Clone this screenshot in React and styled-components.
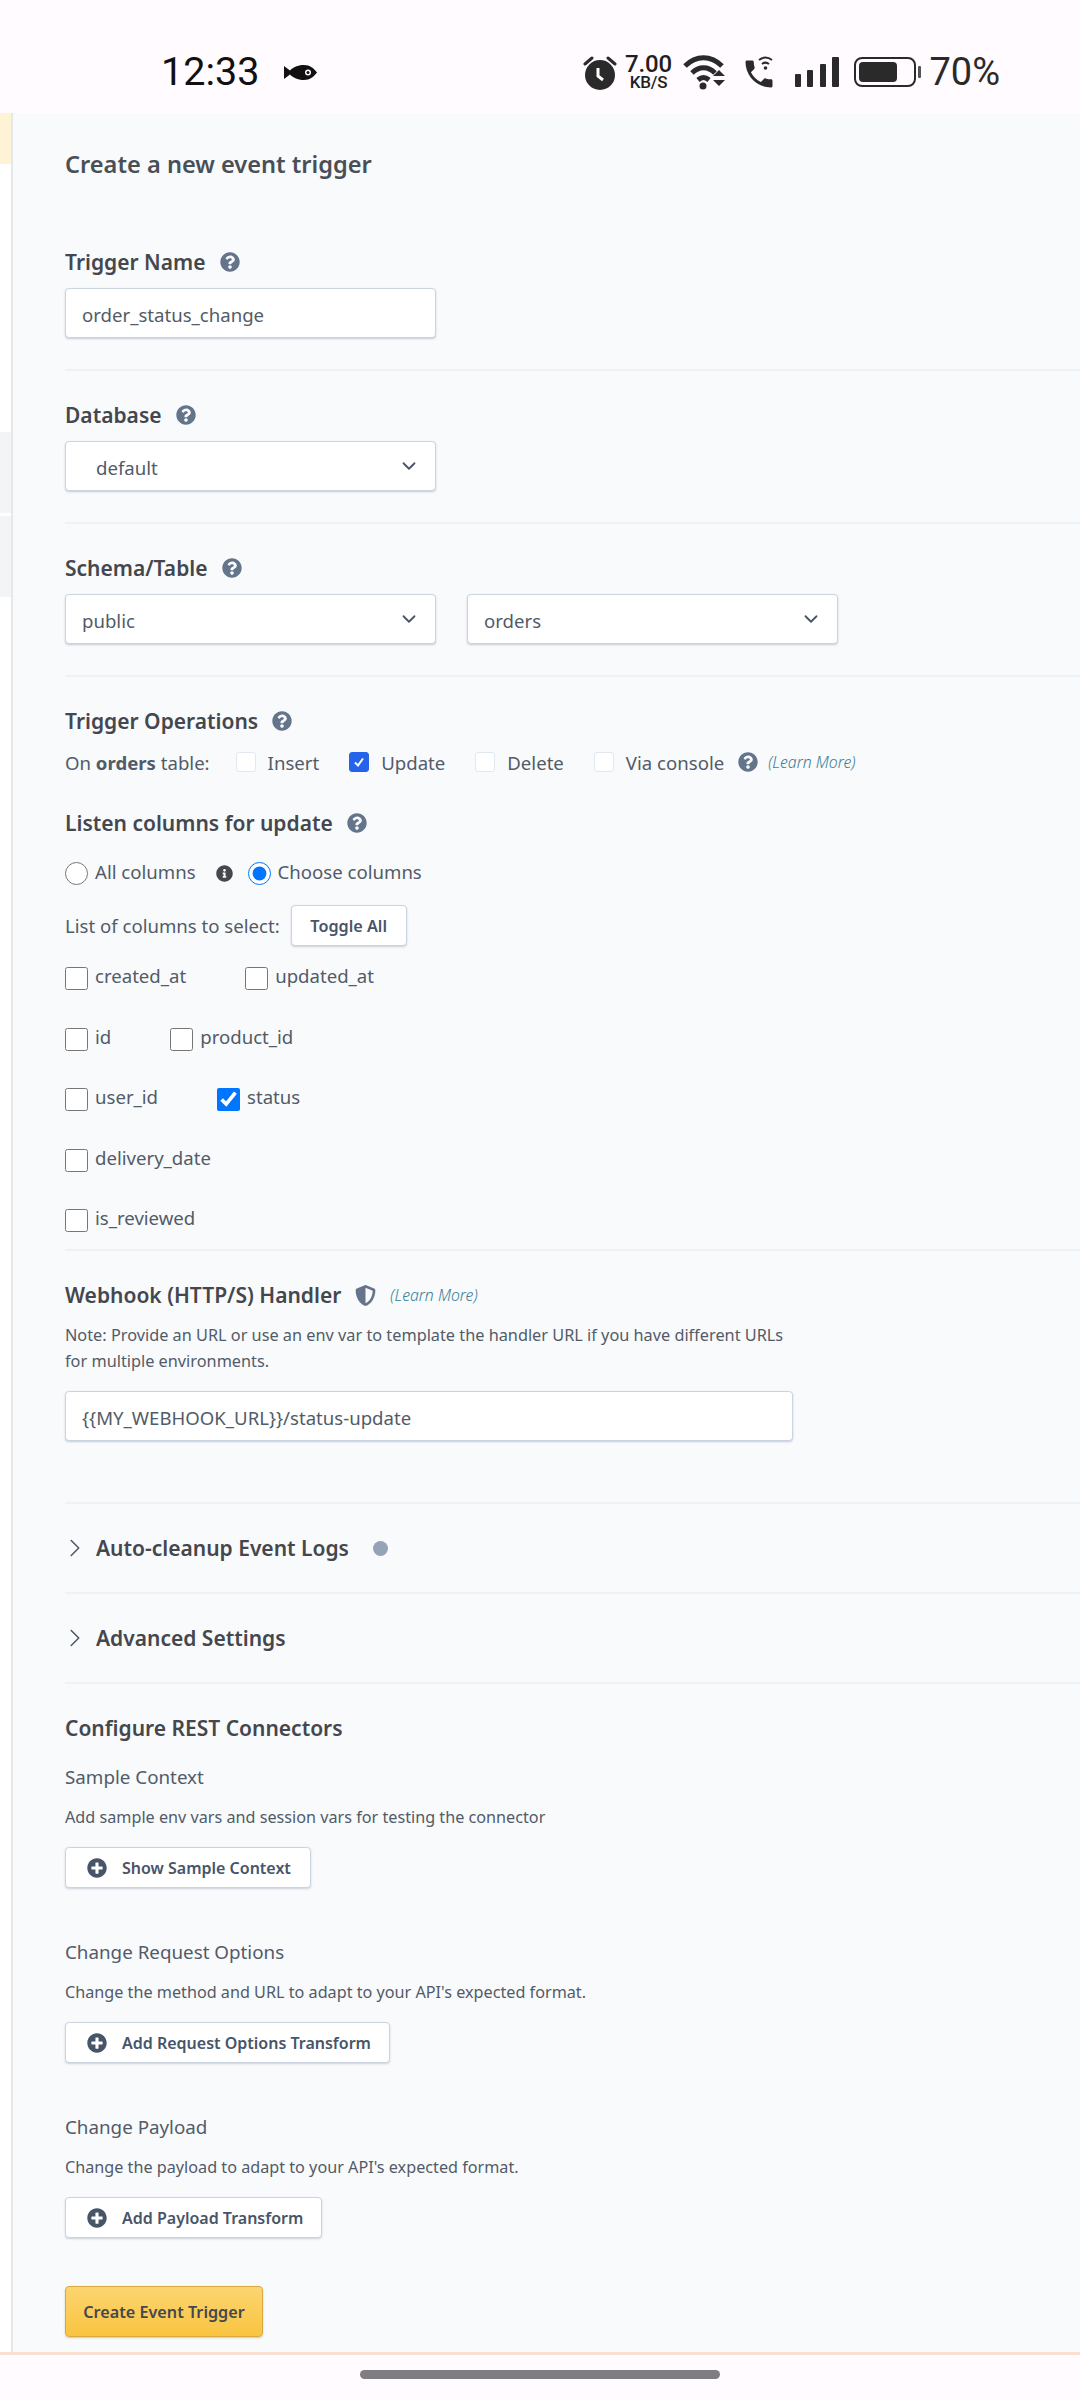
import React from 'react';
import styled, { createGlobalStyle } from 'styled-components';
import { FaQuestionCircle, FaInfoCircle, FaShieldAlt, FaPlusCircle } from 'react-icons/fa';
import { ChevronDown, ChevronRight } from 'lucide-react';

const GlobalStyle = createGlobalStyle`
  html, body { margin: 0; padding: 0; background: #fffbfe; }
  * { box-sizing: border-box; }
  body { font-family: 'Noto Sans', sans-serif; color: #525b68; }
`;

const Phone = styled.div`
  width: 1080px;
  height: 2400px;
  display: flex;
  flex-direction: column;
  overflow: hidden;
`;

/* status bar */
const StatusBar = styled.div`
  height: 113px;
  flex: none;
  padding: 31px 80px 0 161px;
  display: flex;
  align-items: center;
  justify-content: space-between;
  background: #fffbfe;
  font-family: Roboto, sans-serif;
  color: #1f1f1f;
`;
const StatusGroup = styled.div`
  display: flex;
  align-items: center;
`;
const Clock = styled.span`
  font-size: 39.5px;
  line-height: 44px;
  margin-right: 25px;
  color: #111;
`;
const Speed = styled.div`
  width: 46px;
  margin: 0 12px 0 8px;
  display: flex;
  flex-direction: column;
  align-items: center;
  font-weight: 500;
  letter-spacing: -0.2px;
`;
const SpeedValue = styled.div`
  font-size: 24px;
  line-height: 21px;
`;
const SpeedUnit = styled.div`
  font-size: 17px;
  line-height: 15px;
`;
const BatteryText = styled.span`
  font-size: 38px;
  line-height: 44px;
  margin-left: 8px;
  color: #2a2a2a;
`;
const StatusIcon = styled.svg`
  display: block;
  flex: none;
  margin-left: ${p => p.$ml || 0}px;
`;

/* page frame */
const Body = styled.div`
  flex: 1;
  display: flex;
  min-height: 0;
  background: #f8fafc;
`;
const SideStrip = styled.div`
  width: 13px;
  flex: none;
  display: flex;
  flex-direction: column;
  gap: 0;
  background: #fff;
  border-right: 2px solid #e5e7eb;
`;
const StripItem = styled.div`
  height: ${p => p.$h}px;
  background: ${p => p.$bg};
  margin-bottom: ${p => p.$mb || 0}px;
`;
const Main = styled.div`
  flex: 1;
  min-width: 0;
  padding: 34px 0 0 52px;
`;
const Title = styled.h1`
  margin: 0;
  font-size: 23.6px;
  line-height: 34px;
  font-weight: 600;
  color: #4a4f57;
`;
const Label = styled.div`
  display: flex;
  align-items: center;
  height: 30px;
  margin-top: ${p => p.$mt || 0}px;
  font-size: 21px;
  font-weight: 600;
  color: #44474d;
`;
const Help = styled(FaQuestionCircle)`
  flex: none;
  width: 20px;
  height: 20px;
  margin-left: 14px;
  color: #64748b;
`;
const Divider = styled.div`
  height: 2px;
  background: #eef1f5;
  margin-top: ${p => p.$mt || 0}px;
  margin-bottom: ${p => p.$mb || 0}px;
`;
const Row = styled.div`
  display: flex;
  gap: ${p => p.$gap || 0}px;
  margin-top: ${p => p.$mt || 0}px;
`;
const TextInput = styled.input`
  display: block;
  width: ${p => p.$w}px;
  height: 50px;
  padding: 2px 16px 0;
  margin-top: ${p => p.$mt || 11}px;
  background: #fff;
  border: 1px solid #cbd5e1;
  border-radius: 4px;
  box-shadow: 0 1px 2px rgba(100, 116, 139, 0.35);
  font-family: 'Noto Sans', sans-serif;
  font-size: 18.6px;
  color: #525b68;
  outline: none;
`;
const SelectBox = styled.div`
  width: 371px;
  height: 50px;
  display: flex;
  align-items: center;
  justify-content: space-between;
  padding: 2px 15px 0 ${p => p.$pl || 16}px;
  background: #fff;
  border: 1px solid #cbd5e1;
  border-radius: 4px;
  box-shadow: 0 1px 2px rgba(100, 116, 139, 0.35);
  font-size: 18.6px;
  color: #525b68;
`;
const SelectChevron = styled(ChevronDown)`
  width: 22px;
  height: 22px;
  margin-top: -2px;
  color: #475569;
`;

/* trigger operations */
const OpsRow = styled.div`
  display: flex;
  align-items: center;
  height: 30px;
  margin-top: 11px;
  font-size: 18.6px;
  color: #525b68;
`;
const OnTable = styled.span`
  margin-right: 26px;
  b { font-weight: 700; }
`;
const Op = styled.span`
  display: flex;
  align-items: center;
  gap: 12px;
  margin-right: ${p => p.$mr ?? 30}px;
`;
const OpBox = styled.span`
  width: 20px;
  height: 20px;
  flex: none;
  display: flex;
  align-items: center;
  justify-content: center;
  border-radius: 3px;
  background: ${p => (p.$on ? '#2563eb' : '#fff')};
  border: 1px solid ${p => (p.$on ? '#2563eb' : '#e2e8f0')};
`;
const LearnMore = styled.a`
  font-size: 15.8px;
  font-weight: 300;
  font-style: italic;
  color: #3b7d94;
  margin-left: ${p => p.$ml || 10}px;
`;

/* listen columns */
const OptionRow = styled.div`
  display: flex;
  align-items: flex-start;
  height: 30px;
  margin-top: 20px;
  padding-top: 4px;
  font-size: 18.6px;
  line-height: 20px;
`;
const NativeRadio = styled.input`
  width: 23px;
  height: 23px;
  margin: 0 7px 0 0;
  flex: none;
`;
const InfoIcon = styled(FaInfoCircle)`
  width: 17px;
  height: 17px;
  margin: 3px 15px 0 20px;
  color: #44474d;
`;
const ListRow = styled.div`
  display: flex;
  align-items: center;
  margin-top: 17px;
  font-size: 18.6px;
`;
const ToggleButton = styled.button`
  height: 41px;
  width: 116px;
  margin-left: 11px;
  background: #fff;
  border: 1px solid #cbd5e1;
  border-radius: 4px;
  box-shadow: 0 1px 2px rgba(100, 116, 139, 0.3);
  font-family: 'Noto Sans', sans-serif;
  font-size: 16.2px;
  font-weight: 600;
  color: #475569;
`;
const ColumnGrid = styled.div`
  margin-top: 21px;
  display: flex;
  flex-direction: column;
  gap: 37.5px;
`;
const ColumnRow = styled.div`
  display: flex;
  gap: 59px;
  height: 23px;
`;
const ColumnItem = styled.label`
  display: flex;
  align-items: flex-start;
  font-size: 18.6px;
  line-height: 18px;
`;
const NativeCheck = styled.input`
  width: 23px;
  height: 23px;
  margin: 0 7px 0 0;
  flex: none;
`;

/* webhook */
const Shield = styled(FaShieldAlt)`
  width: 21px;
  height: 21px;
  margin-left: 14px;
  color: #64748b;
`;
const Note = styled.p`
  width: 740px;
  margin: 12px 0 0;
  font-size: 16.3px;
  line-height: 26px;
  color: #525b68;
`;

/* collapsibles */
const CollapseRow = styled.div`
  height: 88px;
  display: flex;
  align-items: center;
  font-size: 21px;
  font-weight: 600;
  color: #44474d;
`;
const CollapseChevron = styled(ChevronRight)`
  width: 30px;
  height: 30px;
  margin: 0 6px 0 -5px;
  color: #4b5563;
  stroke-width: 1.2;
`;
const Dot = styled.span`
  width: 15px;
  height: 15px;
  margin-left: 24px;
  border-radius: 50%;
  background: #94a3b8;
`;

/* rest connectors */
const SubHeading = styled.div`
  height: 30px;
  line-height: 30px;
  margin-top: ${p => p.$mt}px;
  font-size: 18.8px;
  color: #525b68;
`;
const Description = styled.div`
  height: 24px;
  line-height: 24px;
  margin-top: 13px;
  font-size: 16.2px;
  color: #525b68;
`;
const OutlineButton = styled.button`
  display: flex;
  align-items: center;
  gap: 15px;
  height: 41px;
  width: ${p => p.$w}px;
  margin-top: 18px;
  padding: 0 0 0 21px;
  background: #fff;
  border: 1px solid #cbd5e1;
  border-radius: 4px;
  box-shadow: 0 1px 2px rgba(100, 116, 139, 0.3);
  font-family: 'Noto Sans', sans-serif;
  font-size: 16px;
  font-weight: 600;
  color: #475569;
`;
const PlusIcon = styled(FaPlusCircle)`
  width: 20px;
  height: 20px;
  color: #475569;
`;
const SubmitButton = styled.button`
  display: block;
  width: 198px;
  height: 51px;
  margin-top: 48px;
  background: linear-gradient(#fcd571, #f9c440);
  border: 1px solid #d9a93f;
  border-radius: 4px;
  box-shadow: 0 1px 2px rgba(120, 90, 20, 0.3);
  font-family: 'Noto Sans', sans-serif;
  font-size: 16.2px;
  font-weight: 600;
  color: #44474d;
`;

/* gesture bar */
const NavBar = styled.div`
  height: 48px;
  flex: none;
  display: flex;
  justify-content: center;
  padding-top: 15px;
  border-top: 3px solid #fbdfd0;
  background: #fffbfe;
`;
const NavHandle = styled.div`
  width: 360px;
  height: 9px;
  border-radius: 5px;
  background: #807d82;
`;

const FishIcon = () => (
  <StatusIcon width="33" height="15" viewBox="0 0 33 15">
    <path fill="#111" d="M0 1l6 4.500C10 1.500 15 0 20 0c6 0 10 3.500 13 7.500-3 4-7 7.500-13 7.500-5 0-10-1.500-14-5.500L0 14z" />
    <circle cx="24" cy="7.500" r="3" fill="#fffbfe" />
    <circle cx="24" cy="7.500" r="1.500" fill="#111" />
  </StatusIcon>
);

const AlarmIcon = () => (
  <StatusIcon width="34" height="35" viewBox="0 0 34 35">
    <circle cx="17" cy="20" r="15" fill="#2a2a2a" />
    <path d="M2 9l7-6M32 9l-7-6" stroke="#2a2a2a" strokeWidth="3" strokeLinecap="round" />
    <path d="M15 13v8l5 4" stroke="#fffbfe" strokeWidth="3" fill="none" />
  </StatusIcon>
);

const WifiIcon = () => (
  <StatusIcon width="44" height="36" viewBox="0 0 44 36">
    <g fill="none" stroke="#2a2a2a" strokeWidth="5">
      <path d="M2 12C13 1 28 1 39 12" />
      <path d="M9 19c7-7 16-7 23 0" />
      <path d="M15 26c4-3.500 7-3.500 11 0" />
    </g>
    <circle cx="20" cy="32" r="3.500" fill="#2a2a2a" />
    <path fill="#2a2a2a" d="M30 22l6-6 6 6zM30 26h12l-6 6z" />
  </StatusIcon>
);

const CallIcon = () => (
  <StatusIcon $ml={17} width="32" height="32" viewBox="0 0 32 32">
    <path
      fill="#2a2a2a"
      transform="translate(-3 0) scale(1.500)"
      d="M6.620 10.790c1.440 2.830 3.760 5.140 6.590 6.590l2.200-2.200c.27-.27.670-.36 1.020-.24 1.120.37 2.330.57 3.570.57.550 0 1 .45 1 1V20c0 .55-.45 1-1 1-9.390 0-17-7.610-17-17 0-.55.45-1 1-1h3.500c.55 0 1 .45 1 1 0 1.250.2 2.450.57 3.570.11.35.03.74-.25 1.020l-2.200 2.200z"
    />
    <g fill="none" stroke="#2a2a2a" strokeWidth="2">
      <path d="M15 4c4-3 9-3 13 0" />
      <path d="M18 8c2.500-2 4.500-2 7 0" />
    </g>
    <circle cx="21.500" cy="12" r="1.800" fill="#2a2a2a" />
  </StatusIcon>
);

const SignalIcon = () => (
  <StatusIcon $ml={19} width="44" height="30" viewBox="0 0 44 30">
    <rect x="0" y="17" width="6" height="13" rx="1" fill="#2a2a2a" />
    <rect x="12" y="13" width="6" height="17" rx="1" fill="#2a2a2a" />
    <rect x="25" y="7" width="6" height="23" rx="1" fill="#2a2a2a" />
    <rect x="37" y="0" width="7" height="30" rx="1" fill="#2a2a2a" />
  </StatusIcon>
);

const BatteryIcon = () => (
  <StatusIcon $ml={15} width="67" height="30" viewBox="0 0 67 30">
    <rect x="1" y="1" width="60" height="28" rx="7" fill="none" stroke="#2a2a2a" strokeWidth="2" />
    <rect x="5" y="5" width="38" height="20" rx="4" fill="#2a2a2a" />
    <rect x="64" y="9" width="3" height="12" rx="1" fill="#555" />
  </StatusIcon>
);

const CheckMark = () => (
  <svg width="14" height="14" viewBox="0 0 14 14">
    <path d="M3 7.500l3 3 5-7" fill="none" stroke="#fff" strokeWidth="2" />
  </svg>
);

const columnRows = [
  [{ name: 'created_at' }, { name: 'updated_at' }],
  [{ name: 'id' }, { name: 'product_id' }],
  [{ name: 'user_id' }, { name: 'status', checked: true }],
  [{ name: 'delivery_date' }],
  [{ name: 'is_reviewed' }],
];

const transforms = [
  {
    title: 'Sample Context',
    description: 'Add sample env vars and session vars for testing the connector',
    button: 'Show Sample Context',
    width: 246,
    mt: 19,
  },
  {
    title: 'Change Request Options',
    description: "Change the method and URL to adapt to your API's expected format.",
    button: 'Add Request Options Transform',
    width: 325,
    mt: 49,
  },
  {
    title: 'Change Payload',
    description: "Change the payload to adapt to your API's expected format.",
    button: 'Add Payload Transform',
    width: 257,
    mt: 49,
  },
];

const App = () => (
  <Phone>
    <GlobalStyle />
    <StatusBar>
      <StatusGroup>
        <Clock>12:33</Clock>
        <FishIcon />
      </StatusGroup>
      <StatusGroup>
        <AlarmIcon />
        <Speed>
          <SpeedValue>7.00</SpeedValue>
          <SpeedUnit>KB/S</SpeedUnit>
        </Speed>
        <WifiIcon />
        <CallIcon />
        <SignalIcon />
        <BatteryIcon />
        <BatteryText>70%</BatteryText>
      </StatusGroup>
    </StatusBar>

    <Body>
      <SideStrip>
        <StripItem $h={51} $bg="#fff3d6" $mb={268} />
        <StripItem $h={81} $bg="#f3f4f6" $mb={3} />
        <StripItem $h={81} $bg="#f3f4f6" />
      </SideStrip>
      <Main>
        <Title>Create a new event trigger</Title>

        <Label $mt={66}>Trigger Name<Help /></Label>
        <TextInput $w={371} defaultValue="order_status_change" />
        <Divider $mt={31} $mb={29} />

        <Label>Database<Help /></Label>
        <Row $mt={11}>
          <SelectBox $pl={30}>default<SelectChevron /></SelectBox>
        </Row>
        <Divider $mt={31} $mb={29} />

        <Label>Schema/Table<Help /></Label>
        <Row $mt={11} $gap={31}>
          <SelectBox>public<SelectChevron /></SelectBox>
          <SelectBox>orders<SelectChevron /></SelectBox>
        </Row>
        <Divider $mt={31} $mb={29} />

        <Label>Trigger Operations<Help /></Label>
        <OpsRow>
          <OnTable>On <b>orders</b> table:</OnTable>
          <Op><OpBox />Insert</Op>
          <Op><OpBox $on><CheckMark /></OpBox>Update</Op>
          <Op><OpBox />Delete</Op>
          <Op $mr={0}><OpBox />Via console</Op>
          <Help />
          <LearnMore>(Learn More)</LearnMore>
        </OpsRow>

        <Label $mt={31}>Listen columns for update<Help /></Label>
        <OptionRow>
          <NativeRadio type="radio" name="cols" />
          All columns
          <InfoIcon />
          <NativeRadio type="radio" name="cols" defaultChecked />
          Choose columns
        </OptionRow>
        <ListRow>
          List of columns to select:
          <ToggleButton type="button">Toggle All</ToggleButton>
        </ListRow>
        <ColumnGrid>
          {columnRows.map(row => (
            <ColumnRow key={row[0].name}>
              {row.map(col => (
                <ColumnItem key={col.name}>
                  <NativeCheck type="checkbox" defaultChecked={col.checked} />
                  {col.name}
                </ColumnItem>
              ))}
            </ColumnRow>
          ))}
        </ColumnGrid>
        <Divider $mt={17} $mb={29} />

        <Label>
          Webhook (HTTP/S) Handler
          <Shield />
          <LearnMore $ml={14}>(Learn More)</LearnMore>
        </Label>
        <Note>
          Note: Provide an URL or use an env var to template the handler URL if you have different URLs for multiple environments.
        </Note>
        <TextInput $w={728} $mt={17} defaultValue="{{MY_WEBHOOK_URL}}/status-update" />
        <Divider $mt={61} />

        <CollapseRow><CollapseChevron />Auto-cleanup Event Logs<Dot /></CollapseRow>
        <Divider />
        <CollapseRow><CollapseChevron />Advanced Settings</CollapseRow>
        <Divider $mb={29} />

        <Label>Configure REST Connectors</Label>
        {transforms.map(t => (
          <div key={t.title}>
            <SubHeading $mt={t.mt}>{t.title}</SubHeading>
            <Description>{t.description}</Description>
            <OutlineButton type="button" $w={t.width}>
              <PlusIcon />
              {t.button}
            </OutlineButton>
          </div>
        ))}
        <SubmitButton type="button">Create Event Trigger</SubmitButton>
      </Main>
    </Body>

    <NavBar><NavHandle /></NavBar>
  </Phone>
);

export default App;
